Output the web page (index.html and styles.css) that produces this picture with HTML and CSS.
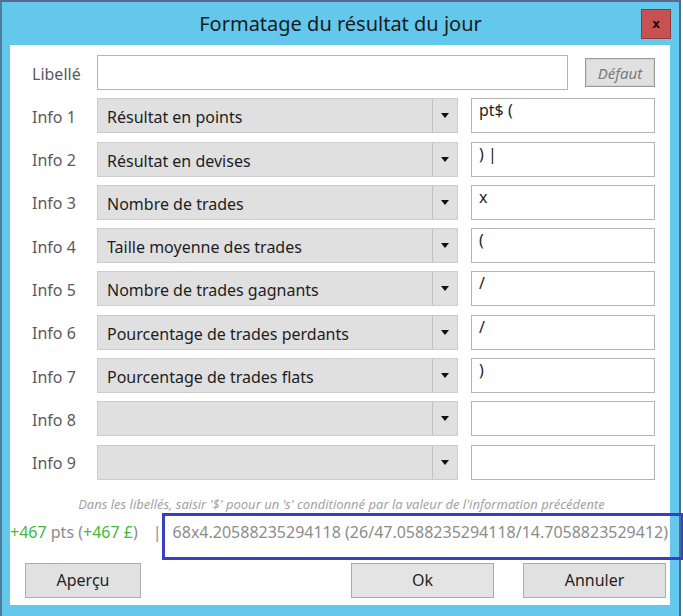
FILE: index.html
```html
<!DOCTYPE html>
<html lang="fr">
<head>
    <meta charset="UTF-8">
    <meta name="viewport" content="width=device-width, initial-scale=1.0">
    <title>Formatage du résultat du jour</title>
    <link rel="stylesheet" href="styles.css">
</head>
<body>

<div class="window">
    <div class="titlebar">
        <span></span>
        <h1 class="title">Formatage du résultat du jour</h1>
        <button class="close">x</button>
    </div>

    <div class="client">
        <div class="form">
            <div class="row">
                <label>Libellé</label>
                <div class="libelle-line">
                    <div class="textbox"></div>
                    <button class="btn btn-default">Défaut</button>
                </div>
            </div>

            <div class="row">
                <label>Info 1</label>
                <div class="combo"><span class="combo-text">Résultat en points</span><span class="combo-arrow"></span></div>
                <div class="textbox">pt$ (</div>
            </div>
            <div class="row">
                <label>Info 2</label>
                <div class="combo"><span class="combo-text">Résultat en devises</span><span class="combo-arrow"></span></div>
                <div class="textbox">) |</div>
            </div>
            <div class="row">
                <label>Info 3</label>
                <div class="combo"><span class="combo-text">Nombre de trades</span><span class="combo-arrow"></span></div>
                <div class="textbox">x</div>
            </div>
            <div class="row">
                <label>Info 4</label>
                <div class="combo"><span class="combo-text">Taille moyenne des trades</span><span class="combo-arrow"></span></div>
                <div class="textbox">(</div>
            </div>
            <div class="row">
                <label>Info 5</label>
                <div class="combo"><span class="combo-text">Nombre de trades gagnants</span><span class="combo-arrow"></span></div>
                <div class="textbox">/</div>
            </div>
            <div class="row">
                <label>Info 6</label>
                <div class="combo"><span class="combo-text">Pourcentage de trades perdants</span><span class="combo-arrow"></span></div>
                <div class="textbox">/</div>
            </div>
            <div class="row">
                <label>Info 7</label>
                <div class="combo"><span class="combo-text">Pourcentage de trades flats</span><span class="combo-arrow"></span></div>
                <div class="textbox">)</div>
            </div>
            <div class="row">
                <label>Info 8</label>
                <div class="combo"><span class="combo-text"></span><span class="combo-arrow"></span></div>
                <div class="textbox"></div>
            </div>
            <div class="row">
                <label>Info 9</label>
                <div class="combo"><span class="combo-text"></span><span class="combo-arrow"></span></div>
                <div class="textbox"></div>
            </div>
        </div>

        <p class="hint">Dans les libellés, saisir '$' poour un 's' conditionné par la valeur de l'information précédente</p>

        <div class="preview">
            <span class="green">+467</span>&nbsp;pts (<span class="green">+467 £</span>)<span class="pipe">|</span>68x4.20588235294118 (26/47.0588235294118/14.7058823529412)
        </div>

        <div class="buttons">
            <button class="btn">Aperçu</button>
            <div class="buttons-right">
                <button class="btn btn-focus">Ok</button>
                <button class="btn">Annuler</button>
            </div>
        </div>
    </div>

    <!-- highlight drawn over the preview line -->
    <div class="highlight"></div>
</div>

</body>
</html>
```

FILE: styles.css
```css
body {
    margin: 0;
    font-family: "Noto Sans", "Open Sans", sans-serif;
    background-color: #ffffff;
}

.window {
    position: relative;
    width: 681px;
    height: 616px;
    background-color: #63c8ec;
    border-top: 2px solid #5b6a8c;
    border-left: 2px solid #4d7f9c;
    border-right: 2px solid #4d6a8c;
    box-sizing: border-box;
}

.titlebar {
    display: grid;
    grid-template-columns: 1fr auto 1fr;
    align-items: center;
    height: 43px;
    padding: 0 8px 0 8px;
}

.title {
    margin: 0;
    font-size: 20px;
    font-weight: normal;
    color: #1b1b1b;
}

.close {
    justify-self: end;
    width: 30px;
    height: 30px;
    margin-top: 1px;
    padding: 0;
    background-color: #c75050;
    border: 1px solid #8a3a3a;
    color: #111;
    font-family: "DejaVu Sans", sans-serif;
    font-size: 12px;
    font-weight: bold;
    line-height: 26px;
}

.client {
    margin-left: 8px;
    width: 660px;
    height: 560px;
    background-color: #ffffff;
    padding: 10px 15px 0 22px;
    box-sizing: border-box;
}

.form {
    display: flex;
    flex-direction: column;
    gap: 8.3px;
}

.row {
    display: grid;
    grid-template-columns: 65px 361px 197px;
    height: 35px;
    align-items: center;
}

.row label {
    font-size: 16px;
    color: #5a5a5a;
    padding-top: 2px;
}

.row > .textbox {
    margin-left: 13px;
}

.libelle-line {
    grid-column: 2 / 4;
    display: flex;
    align-items: center;
    gap: 17px;
    height: 35px;
}

.libelle-line .textbox {
    flex: 1;
}

.textbox {
    height: 35px;
    box-sizing: border-box;
    border: 1px solid #b4b4b4;
    background-color: #ffffff;
    font-size: 16px;
    color: #1e1e1e;
    padding: 1px 7px;
    line-height: 21px;
}

.combo {
    display: flex;
    height: 35px;
    box-sizing: border-box;
    border: 1px solid #cccccc;
    background-color: #e0e0e0;
}

.combo-text {
    flex: 1;
    font-size: 16px;
    color: #1e1e1e;
    padding: 7px 0 0 9px;
}

.combo-arrow {
    width: 24px;
    border-left: 1px solid #c2c2c2;
    display: flex;
    align-items: center;
    justify-content: center;
}

.combo-arrow::after {
    content: "";
    border-left: 4px solid transparent;
    border-right: 4px solid transparent;
    border-top: 5px solid #111111;
}

.btn {
    font-family: "Noto Sans", "Open Sans", sans-serif;
    font-size: 16px;
    color: #1e1e1e;
    background-color: #e1e1e1;
    border: 1px solid #adadad;
    height: 35px;
    padding: 0;
}

.btn-default {
    width: 70px;
    height: 29px;
    font-size: 15px;
    font-style: italic;
    color: #7a7a7a;
    border-color: #9c9c9c;
    box-shadow: inset 0 0 0 1px #d2d2d2;
}

.btn-focus {
    border-color: #7fb4e6;
    background-color: #e4e4e4;
}

.hint {
    margin: 15px 0 0;
    font-size: 13px;
    font-style: italic;
    color: #a3a3a3;
    text-align: center;
    padding-right: 4px;
}

.preview {
    margin: 8px 0 0 -22px;
    font-size: 16px;
    color: #8c8c8c;
    white-space: nowrap;
    height: 24px;
}

.pipe {
    margin: 0 11px 0 15px;
}

.green {
    color: #40b93c;
}

.buttons {
    display: flex;
    justify-content: space-between;
    margin: 18px -11px 0 -7px;
}

.buttons .btn {
    width: 116px;
}

.buttons-right {
    display: flex;
    gap: 29px;
}

.buttons-right .btn {
    width: 143px;
}

.highlight {
    position: absolute;
    left: 160px;
    top: 511px;
    width: 522px;
    height: 47px;
    border: 3px solid #3a40c4;
    box-sizing: border-box;
}
```
